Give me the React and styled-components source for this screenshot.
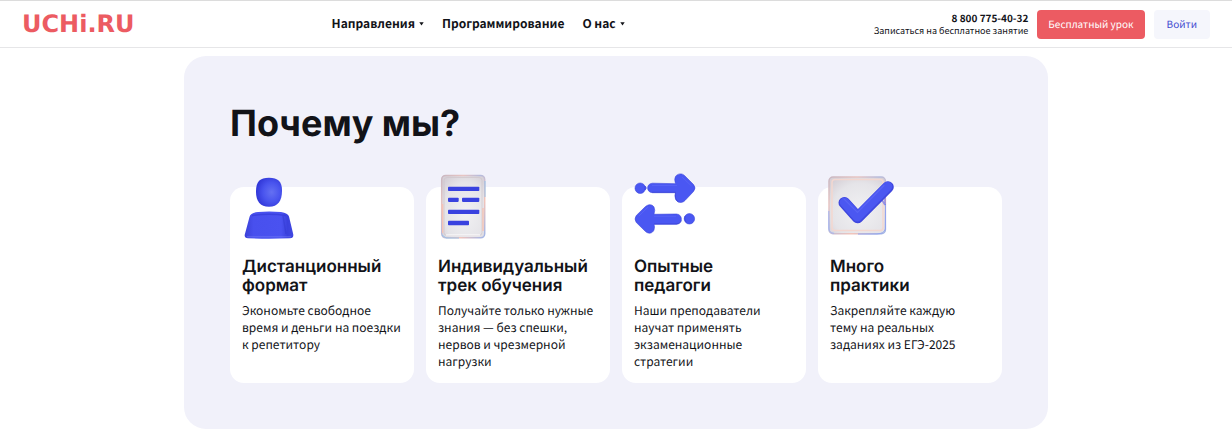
import React from 'react'
import styled, { createGlobalStyle } from 'styled-components'

const GlobalStyle = createGlobalStyle`
  * {
    box-sizing: border-box;
  }

  body {
    margin: 0;
    background: #ffffff;
    color: #121318;
    font-family: 'Noto Sans CJK JP', 'Noto Sans', sans-serif;
    text-rendering: geometricPrecision;
  }
`

const Header = styled.header`
  display: flex;
  align-items: center;
  height: 48px;
  padding: 0 22px;
  border-top: 1px solid #dcdcdc;
  border-bottom: 1px solid #e6e6e8;
`

const Logo = styled.a`
  color: #ec5b62;
  font-family: 'DejaVu Sans', sans-serif;
  font-size: 24px;
  font-weight: 700;
  line-height: 24px;
  text-decoration: none;
`

const Nav = styled.nav`
  display: flex;
  align-items: center;
  gap: 18px;
  margin-left: 16vw;
`

const navItem = `
  display: flex;
  align-items: center;
  gap: 4px;
  padding: 0;
  border: 0;
  background: none;
  color: #121318;
  font-family: inherit;
  font-size: 12px;
  font-weight: 600;
  line-height: 20px;
  text-decoration: none;
  text-rendering: inherit;
  white-space: nowrap;
  cursor: pointer;
`

const NavLink = styled.a`
  ${navItem}
`

const NavButton = styled.button`
  ${navItem}
`

const Actions = styled.div`
  display: flex;
  align-items: center;
  gap: 9px;
  margin-left: auto;
`

const Contact = styled.div`
  display: flex;
  flex-direction: column;
  text-align: right;
  white-space: nowrap;
`

const Phone = styled.a`
  color: #121318;
  font-size: 10px;
  font-weight: 600;
  line-height: 13px;
  text-decoration: none;
`

const PhoneNote = styled.span`
  font-size: 9px;
  line-height: 13px;
`

const Button = styled.button`
  height: 29px;
  padding: 0 ${props => props.$primary ? '11px' : '13px'};
  border: 0;
  border-radius: 4px;
  background: ${props => props.$primary ? '#ec5b62' : '#f5f6fc'};
  color: ${props => props.$primary ? '#ffffff' : '#424ad0'};
  font-family: inherit;
  font-size: 10px;
  line-height: 20px;
  text-rendering: inherit;
  white-space: nowrap;
  cursor: pointer;
`

const Panel = styled.main`
  max-width: 864px;
  margin: 8px auto 12px;
  padding: 46px;
  border-radius: 22px;
  background: #f1f1fa;
`

const Heading = styled.h1`
  margin: 0 0 43px;
  font-family: Inter, sans-serif;
  font-size: 36px;
  font-weight: 700;
  line-height: 42px;
`

const Cards = styled.div`
  display: grid;
  grid-template-columns: repeat(4, 1fr);
  gap: 12px;
`

const Card = styled.article`
  padding: 0 12px 13px;
  border-radius: 14px;
  background: #ffffff;
`

const CardIcon = styled.svg`
  display: block;
  width: 72px;
  height: 68px;
  margin: -14px 0 17px -4px;
`

const CardTitle = styled.h2`
  margin: 0 0 6px;
  font-family: Inter, sans-serif;
  font-size: 17px;
  font-weight: 600;
  line-height: 19px;
  white-space: pre-line;
`

const CardText = styled.p`
  margin: 0;
  font-size: 12px;
  line-height: 17px;
  white-space: pre-line;
`

const Caret = () => (
  <svg width="5" height="4" viewBox="0 0 5 4" aria-hidden="true">
    <path d="M0.3 0.3h4.4L2.500 3.500z" fill="currentColor" />
  </svg>
)

const PersonIcon = () => (
  <CardIcon viewBox="0 0 72 68" aria-hidden="true">
    <defs>
      <radialGradient id="head" cx="0.6" cy="0.5" r="0.6">
        <stop offset="0" stopColor="#6470f2" />
        <stop offset="0.55" stopColor="#4954ee" />
        <stop offset="1" stopColor="#3137d8" />
      </radialGradient>
      <linearGradient id="body" x1="0" x2="1">
        <stop offset="0" stopColor="#3a40d8" />
        <stop offset="0.18" stopColor="#4850ee" />
        <stop offset="0.75" stopColor="#4a52f0" />
        <stop offset="0.88" stopColor="#3a41dd" />
        <stop offset="1" stopColor="#4148e2" />
      </linearGradient>
    </defs>
    <path d="M31 4.8C40 4.8 44 8.5 44 17.5C44 28 40 33.7 31 33.7S18 28 18 18.5C18 8.5 22 4.8 31 4.8Z" fill="url(#head)" />
    <path d="M20 39Q31 38 43 39Q50 40 51 43.5L55.2 61Q56 65 52 65.3Q31 66 10 65.3Q6 65 6.8 61.5L11.5 44Q12.5 39.6 20 39Z" fill="url(#body)" />
    <path d="M14 42.5Q31 40 48 42.5" fill="none" stroke="#353bd7" strokeWidth="1.5" opacity="0.7" />
    <path d="M9 63.8H53" stroke="#7b82f8" strokeWidth="0.8" opacity="0.7" />
    <path d="M45 43L48 61" stroke="#2f36cb" strokeWidth="1.4" opacity="0.4" />
  </CardIcon>
)

const GlassDefs = ({ id }) => (
  <defs>
    <linearGradient id={`${id}-edge`} x1="0" y1="0" x2="1" y2="1">
      <stop offset="0" stopColor="#c9b7c1" />
      <stop offset="0.25" stopColor="#e9c5c2" />
      <stop offset="0.45" stopColor="#b5bbdd" />
      <stop offset="0.7" stopColor="#f3c4b9" />
      <stop offset="1" stopColor="#9fb5e8" />
    </linearGradient>
    <radialGradient id={`${id}-face`} cx="0.55" cy="0.6" r="0.7">
      <stop offset="0" stopColor="#f1f1f3" />
      <stop offset="0.7" stopColor="#e5e4e8" />
      <stop offset="1" stopColor="#d6d0d7" />
    </radialGradient>
  </defs>
)

const DocumentIcon = () => (
  <CardIcon viewBox="0 0 72 68" aria-hidden="true">
    <GlassDefs id="doc" />
    <rect x="7.7" y="2.4" width="43" height="62.4" rx="4" fill="url(#doc-face)" stroke="url(#doc-edge)" strokeWidth="1.5" />
    <rect x="10" y="4.5" width="38" height="58" rx="3" fill="none" stroke="#cfc4cb" strokeWidth="1" opacity="0.7" />
    <path d="M8.6 31V60M49 35V58" stroke="#f6c3b5" strokeWidth="1.4" />
    <path d="M51 8V24M8 62L12 65H25" fill="none" stroke="#8fc1ec" strokeWidth="0.9" />
    <path d="M12 62H46" stroke="#ffffff" strokeWidth="1" />
    <g fill="#3942df">
      <rect x="14" y="13.7" width="31.3" height="4.4" rx="0.8" />
      <rect x="14" y="24.7" width="10.7" height="4.2" rx="0.8" />
      <rect x="28" y="24.7" width="17.3" height="4.2" rx="0.8" />
      <rect x="14" y="36.7" width="31.3" height="4.4" rx="0.8" />
      <rect x="14" y="47.8" width="21" height="4.4" rx="0.8" />
    </g>
  </CardIcon>
)

const ArrowsIcon = () => (
  <CardIcon viewBox="0 0 72 68" aria-hidden="true">
    <g fill="#4a57f2" stroke="#3d46dc" strokeWidth="0.6">
      <circle cx="10.2" cy="15.2" r="5.2" />
      <path d="M15 13l1.5 2-1.5 2z" />
      <path d="M22.5 10.2L45.5 10.7Q44 6 45.5 3.5C47.5 0.5 52 0 54.5 2.5L63.5 11.5Q66.5 15 63.5 18.5L55 27.5C51.5 31 47 29.5 45.5 26Q44.5 23 45.5 19.7L22.5 19.7C16 19.5 16 10.5 22.5 10.2Z" />
      <circle cx="59.4" cy="45.8" r="5.2" />
      <path d="M46.5 41L24 41.3Q25.5 37 24 34C22 31 18.5 31.2 15.5 33.5L6.3 42.5Q3.8 46 6.3 49.5L15.5 58.5C18.5 61.2 22.5 60.5 24 57Q25 54 24 51.3L46.5 51.2C53 51 53 41.2 46.5 41Z" />
    </g>
    <g fill="none" stroke="#3841d3" strokeWidth="1" opacity="0.6">
      <path d="M22 19.3H45.5Q44.5 27 48.5 29" />
      <path d="M24 51H47Q50.5 50.5 51.5 47.5" />
      <path d="M55 43Q53.8 46 56 49" />
    </g>
    <g fill="none" stroke="#626df8" strokeWidth="1" opacity="0.5">
      <path d="M22 12.5H47M52 4L61.5 13" />
      <path d="M24 43.3H46M18 34L9 43" />
    </g>
  </CardIcon>
)

const CheckIcon = () => (
  <CardIcon viewBox="0 0 72 68" aria-hidden="true">
    <GlassDefs id="check" />
    <rect x="3" y="4" width="56.4" height="56.7" rx="4" fill="url(#check-face)" stroke="url(#check-edge)" strokeWidth="1.5" />
    <rect x="6" y="6.5" width="51" height="51" rx="3" fill="none" stroke="#f3d7d0" strokeWidth="1.5" />
    <path d="M2.8 38V55Q3 60 8 60.3" fill="none" stroke="#a6b4ef" strokeWidth="1" />
    <path d="M59.5 31V56Q58 60.7 51 61H32" fill="none" stroke="#92a5ef" strokeWidth="1" />
    <path d="M56 27L59 32M59 23V32" stroke="#5860ee" strokeWidth="1.5" opacity="0.6" />
    <path d="M18.3 29.7L31.7 44.5L62 14" fill="none" stroke="#3f47de" strokeWidth="11.6" strokeLinecap="round" strokeLinejoin="round" />
    <path d="M18.5 29.2L31.5 43.7L61.5 13.5" fill="none" stroke="#4b57f1" strokeWidth="9.6" strokeLinecap="round" strokeLinejoin="round" />
    <path d="M18 26L31.5 39.5L58 12.5" fill="none" stroke="#6570fa" strokeWidth="1.2" strokeLinecap="round" opacity="0.5" />
  </CardIcon>
)

const features = [
  {
    icon: PersonIcon,
    title: 'Дистанционный\nформат',
    text: 'Экономьте свободное\nвремя и деньги на поездки\nк репетитору'
  },
  {
    icon: DocumentIcon,
    title: 'Индивидуальный\nтрек обучения',
    text: 'Получайте только нужные\nзнания — без спешки,\nнервов и чрезмерной\nнагрузки'
  },
  {
    icon: ArrowsIcon,
    title: 'Опытные\nпедагоги',
    text: 'Наши преподаватели\nнаучат применять\nэкзаменационные\nстратегии'
  },
  {
    icon: CheckIcon,
    title: 'Много\nпрактики',
    text: 'Закрепляйте каждую\nтему на реальных\nзаданиях из ЕГЭ-2025'
  }
]

const App = () => (
  <>
    <GlobalStyle />
    <Header>
      <Logo href="#">UCHi.RU</Logo>
      <Nav>
        <NavButton type="button">Направления <Caret /></NavButton>
        <NavLink href="#">Программирование</NavLink>
        <NavButton type="button">О нас <Caret /></NavButton>
      </Nav>
      <Actions>
        <Contact>
          <Phone href="tel:88007754032">8 800 775-40-32</Phone>
          <PhoneNote>Записаться на бесплатное занятие</PhoneNote>
        </Contact>
        <Button type="button" $primary>Бесплатный урок</Button>
        <Button type="button">Войти</Button>
      </Actions>
    </Header>

    <Panel>
      <Heading>Почему мы?</Heading>
      <Cards>
        {features.map(({ icon: Icon, title, text }) => (
          <Card key={title}>
            <Icon />
            <CardTitle>{title}</CardTitle>
            <CardText>{text}</CardText>
          </Card>
        ))}
      </Cards>
    </Panel>
  </>
)

export default App
